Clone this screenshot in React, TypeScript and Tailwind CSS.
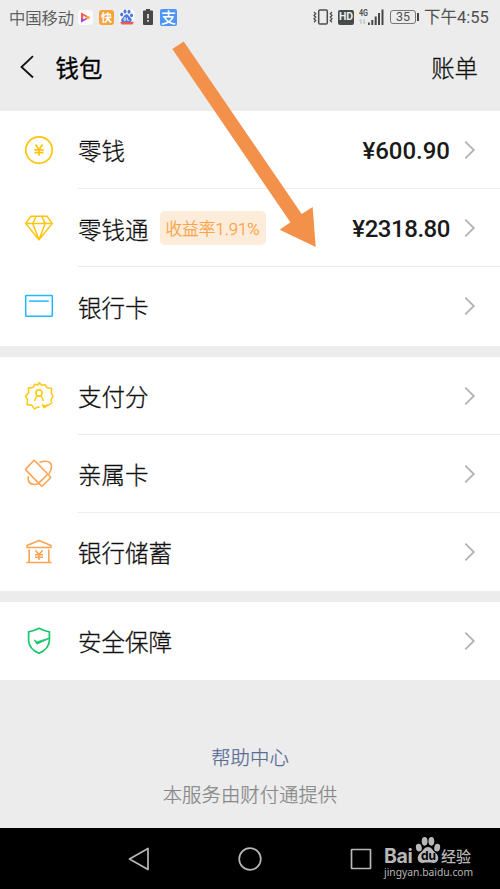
import React from "react";

interface RowProps {
  icon: React.ReactNode;
  title: string;
  tag?: string;
  amount?: string;
  amountClass?: string;
  last?: boolean;
}

const Row: React.FC<RowProps> = ({ icon, title, tag, amount, amountClass = "", last }) => {
  return (
    <div className="flex h-[78.2px] items-stretch pl-6">
      <div className="flex w-[54px] shrink-0 items-center">{icon}</div>
      <div
        className={`flex flex-1 items-center border-b pt-px pr-6 ${last ? "border-transparent" : "border-[#ededed]"}`}
      >
        <span className="pt-[2px] text-[23.5px] leading-none font-light text-[#111] [-webkit-text-stroke:0.3px_#111]">
          {title}
        </span>
        {tag && (
          <span className="ml-[11px] flex h-[34px] w-[106px] items-center justify-center rounded-[5px] bg-[#feecdb] pt-[2px] font-[Roboto,'Noto_Sans_CJK_SC',sans-serif] text-[16.7px] font-light whitespace-nowrap text-[#faa040] [-webkit-text-stroke:0.25px_#faa040]">
            {tag}
          </span>
        )}
        <span
          className={`ml-auto pt-px font-[Roboto,sans-serif] text-[24px] leading-none font-medium text-[#1a1a1a] ${amountClass}`}
        >
          {amount}
        </span>
        <svg className="ml-[14px] h-5 w-3 shrink-0" viewBox="0 0 12 20" fill="none" stroke="#b2b2b2" strokeWidth="1.8">
          <path d="M1.3 1.6 9.8 10l-8.5 8.4" />
        </svg>
      </div>
    </div>
  );
};

const CoinIcon = () => (
  <svg className="h-[30px] w-[30px]" viewBox="0 0 30 30" fill="none" stroke="#fec40c" strokeWidth="1.7">
    <circle cx="15" cy="15" r="13.2" />
    <path d="m11.4 9.500 3.600 5 3.600-5M10.400 14.900h9.200M10.400 17.600h9.200M15 14.500v6.300" />
  </svg>
);

const DiamondIcon = () => (
  <svg className="h-[30px] w-[30px]" viewBox="0 0 30 30" fill="none" stroke="#fec40c" strokeWidth="1.5" strokeLinejoin="round">
    <path d="M7 3.200h16l5.300 7.200L15 26.800 1.700 10.400zM1.700 10.400h26.600M12.200 3.200l-3.400 7.200L15 26.800l6.200-16.400-3.400-7.200" />
  </svg>
);

const CardIcon = () => (
  <svg className="h-[30px] w-[30px]" viewBox="0 0 30 30" fill="none" stroke="#23b7fb" strokeWidth="1.5">
    <rect x="1.7" y="4.4" width="26.6" height="20.9" rx="0.6" />
    <path d="M5 10.100h19.800" />
  </svg>
);

const ScoreIcon = () => (
  <svg className="h-[30px] w-[30px]" viewBox="0 0 30 30" fill="none" stroke="#fdcb18" strokeWidth="1.6" strokeLinejoin="round">
    <path d="M15.600 26.300 14 26l-3.600 1.900-2.500-3.700-4.800-.6.500-4.600-2-3.900 3.100-3.300-.4-4.700 4.600-.7 2-3.100 3.400.6L15 1.600l2.900 2.700 3.200-.6 2 3.100 4.600.7-.4 4.700 1.600 3.300-1.700 2.900.2 2.700" />
    <path d="m18 23.600 1.900 3.600 8.700-5.400-7.600 2.800z" strokeWidth="0.9" fill="#fdcb18" />
    <circle cx="15" cy="12" r="3.100" />
    <path d="M13.400 14.600q-2.300 1.700-2.800 5.400M16.600 14.600q2.300 1.700 2.800 5.400" />
  </svg>
);

const FamilyIcon = () => (
  <svg className="h-[30px] w-[30px]" viewBox="0 0 30 30" fill="none" stroke="#fba351" strokeWidth="1.6" strokeLinejoin="round">
    <path d="M9.600 1.700 1.900 9.900q-.6.6 0 1.200l15.400 15.600q.7.600 1.400 0l7.700-7.700q.6-.6 0-1.200L10.800 1.700q-.6-.6-1.200 0zM14.800 24.100l9.100-9.100" />
    <path d="M15.300 3.600C19 1.800 24 1.600 26.200 3.800c2 2.400 1.500 6.500-1.300 11M4.300 17.400c-.4 3.700.8 7 3.800 7.700 2.100.6 4.500.3 6.700-.6" />
  </svg>
);

const BankIcon = () => (
  <svg className="h-[30px] w-[30px]" viewBox="0 0 30 30" fill="none" stroke="#fba351" strokeWidth="1.6" strokeLinejoin="round">
    <path d="M15 3.600 3 8.500v2h24v-2zM5.200 12.500v13M24.800 12.500v13M2.400 25.500h25.200" />
    <path d="m11.400 13.200 3.600 4.600 3.600-4.600M11 17.800h8M11 20.300h8M15 17.800v5.300" strokeWidth="1.5" />
  </svg>
);

const ShieldIcon = () => (
  <svg className="h-[30px] w-[30px]" viewBox="0 0 30 30" fill="none" stroke="#17c66b" strokeWidth="1.7" strokeLinejoin="round">
    <path d="M25.400 12.200V5.800Q19.500 4.800 15 2.300 10.500 4.800 4.600 5.800v8.900Q5.200 23 15 27.300 24.800 23.200 25.400 14.500v-2.300" />
    <path d="m10.200 13.900 2.700 4.300 12.300-5.600v-.6l-12 3.700z" fill="#17c66b" strokeWidth="0.8" />
  </svg>
);

const StatusBar = () => (
  <div className="flex h-[34px] items-center pl-[9px] text-[#505050]">
    <span className="w-[65px] text-[16.3px] leading-none font-light whitespace-nowrap [-webkit-text-stroke:0.25px_#505050]">
      中国移动
    </span>
    <svg className="ml-[4px] h-[15px] w-[15px]" viewBox="0 0 15 15">
      <defs>
        <linearGradient id="play" x1="0" y1="0" x2="0" y2="1">
          <stop offset="0.1" stopColor="#ff4a50" />
          <stop offset="0.5" stopColor="#f36b4b" />
          <stop offset="0.75" stopColor="#a936ed" />
        </linearGradient>
      </defs>
      <rect width="15" height="15" rx="3.5" fill="#fafafa" />
      <path d="M3 2.500v10l9.300-5z" fill="url(#play)" />
      <path d="m8.400 5.400 3.900 2.100-3.900 2.100z" fill="#ffa53e" />
      <path d="m5.300 5.600 3.200 1.900-3.200 1.900z" fill="#fff" />
    </svg>
    <span className="ml-[6px] flex h-[15px] w-[15px] items-center justify-center rounded-[3px] bg-[#f9a13b] text-[11px] leading-none font-bold text-white">
      快
    </span>
    <svg className="ml-[5px] h-4 w-4" viewBox="0 0 16 16">
      <rect x="0.5" y="0.5" width="15" height="15" rx="3.5" fill="#fafafa" />
      <g fill="#4977e0">
        <ellipse cx="6" cy="2.500" rx="1.500" ry="2" />
        <ellipse cx="10" cy="2.800" rx="1.500" ry="2" />
        <ellipse cx="2.700" cy="5.500" rx="1.500" ry="2" />
        <ellipse cx="12.500" cy="6.300" rx="1.500" ry="1.900" />
        <path d="M7.500 5.300c2 0 2.300 2 4 3.400 2.200 2 1.100 4.600-1.200 4.500-2 0-4.100 0-5.600.1C2 13.400 1.500 10.500 3.500 9c1.700-1.300 2-3.700 4-3.700z" />
      </g>
      <path d="M5.300 8.800h1.500v2.500H5zM8.500 8.500v2.800h2" stroke="#fff" strokeWidth="0.8" fill="none" />
      <path d="M1 12.700h14l-1.500 2.800h-11z" fill="#e45a59" />
    </svg>
    <svg className="ml-2 h-4 w-[10px]" viewBox="0 0 10 16">
      <path d="M3 0h4v1.500h2a1 1 0 0 1 1 1V15a1 1 0 0 1-1 1H1a1 1 0 0 1-1-1V2.500a1 1 0 0 1 1-1h2z" fill="#474747" />
      <path d="M5 5v4.500M5 11v1.700" stroke="#eee" strokeWidth="1.6" />
    </svg>
    <span className="ml-[7px] flex h-[17px] w-[17px] items-center justify-center rounded-[2px] bg-[#4d96f7] pb-px text-[15px] leading-none font-medium text-white">
      支
    </span>

    <svg className="ml-[136px] h-4 w-5" viewBox="0 0 20 16" fill="none" stroke="#4c4c4c">
      <rect x="5.7" y="0.9" width="8.6" height="14.2" rx="1.3" strokeWidth="1.5" />
      <path d="m1 3 1.700 1.700L1 6.400l1.700 1.700L1 9.800l1.700 1.700L1 13.200M19 3l-1.700 1.700L19 6.400l-1.700 1.700L19 9.800l-1.700 1.700 1.700 1.700" strokeWidth="1.3" />
    </svg>
    <span className="ml-[5px] flex h-[15px] w-4 items-center justify-center rounded-[2px] bg-[#4a4a4a] pt-px font-[Roboto,sans-serif] text-[10.5px] leading-none font-bold text-[#eee]">
      HD
    </span>
    <div className="ml-[5px] flex h-4 w-[25px] items-end">
      <div className="flex h-full w-[9px] flex-col">
        <span className="origin-left scale-x-75 font-[Roboto,sans-serif] text-[9.5px] leading-[8px] font-bold">4G</span>
        <svg className="mt-[2px] h-[5px] w-[7px]" viewBox="0 0 7 5" fill="none" stroke="#b8b8b8">
          <path d="M2 5V.5L.5 2M5 0v4.500L6.500 3" />
        </svg>
      </div>
      <svg className="h-4 w-4" viewBox="0 0 16 16" fill="#474747">
        <path d="M0 13.500h1.800V16H0zM3.300 11h2v5h-2zM6.700 7.500h2V16h-2zM10 4h2v12h-2zM13.500.5h2V16h-2z" />
      </svg>
    </div>
    <div className="ml-[6px] flex items-center">
      <span className="flex h-[14px] w-[26px] items-center justify-center rounded-[3px] border border-[#777] font-[Roboto,sans-serif] text-[12.5px] leading-none">
        35
      </span>
      <span className="ml-px h-2 w-[2px] bg-[#474747]" />
    </div>
    <span className="ml-[5px] pt-[3px] font-[Roboto,'Noto_Sans_CJK_SC',sans-serif] text-[16.5px] leading-none whitespace-nowrap">
      下午4:55
    </span>
  </div>
);

const Watermark = () => (
  <div className="absolute top-[836px] left-[384px] w-[92px] text-[#b8b8b8]">
    <div className="flex h-[28px] items-end">
      <span className="mb-px w-[31px] font-[Inter,sans-serif] text-[19.5px] leading-[14px] font-bold tracking-[-0.3px]">Bai</span>
      <div className="relative h-[28px] w-[26px]">
        <svg className="absolute top-0 left-0 h-[28px] w-[26px]" viewBox="0 0 26 29" fill="currentColor">
          <ellipse cx="3.500" cy="12" rx="3" ry="4" transform="rotate(-12 3.500 12)" />
          <ellipse cx="9.500" cy="5.500" rx="3" ry="4.500" />
          <ellipse cx="16.500" cy="5.500" rx="3" ry="4.500" />
          <ellipse cx="22.500" cy="12" rx="3" ry="4" transform="rotate(12 22.500 12)" />
          <path d="M13 11.500c4 0 4.700 3.700 7.500 5.700 5.300 4 3.500 11.300-2 10.700-3.800-.6-7.200-.6-11 0C2 28.500.2 21.200 5.500 17.200c2.800-2 3.500-5.700 7.500-5.700z" />
        </svg>
        <span className="absolute top-[14px] left-[6px] font-[Inter,sans-serif] text-[12px] leading-none font-bold text-black">du</span>
      </div>
      <span className="mb-px text-[15px] leading-[15px] font-medium">经验</span>
    </div>
    <div className="mt-[2px] font-['Noto_Sans',sans-serif] text-[10.3px] leading-[12px] whitespace-nowrap">jingyan.baidu.com</div>
  </div>
);

export default function App() {
  return (
    <div className="relative flex h-[889px] w-[500px] flex-col overflow-hidden bg-[#ececec] font-['Noto_Sans_CJK_SC',sans-serif]">
      <StatusBar />
      <header className="flex h-[77px] items-start pt-[21px] pr-[22px] pl-[20px]">
        <svg className="h-6 w-[14px]" viewBox="0 0 14 24" fill="none" stroke="#111" strokeWidth="1.8">
          <path d="M13 1.100 1.500 12 13 22.500" />
        </svg>
        <h1 className="ml-[21.5px] text-[23.4px] leading-[24px] font-normal text-black [-webkit-text-stroke:0.3px_#000]">钱包</h1>
        <span className="ml-auto text-[23.4px] leading-[24px] font-light text-[#111] [-webkit-text-stroke:0.3px_#111]">账单</span>
      </header>

      <section className="bg-white">
        <Row icon={<CoinIcon />} title="零钱" amount="¥600.90" />
        <Row icon={<DiamondIcon />} title="零钱通" tag="收益率1.91%" amount="¥2318.80" amountClass="tracking-[-0.45px]" />
        <Row icon={<CardIcon />} title="银行卡" last />
      </section>
      <section className="mt-[11px] bg-white">
        <Row icon={<ScoreIcon />} title="支付分" />
        <Row icon={<FamilyIcon />} title="亲属卡" />
        <Row icon={<BankIcon />} title="银行储蓄" last />
      </section>
      <section className="mt-[11px] bg-white">
        <Row icon={<ShieldIcon />} title="安全保障" last />
      </section>

      <footer className="flex flex-1 flex-col items-center pt-[66px]">
        <a className="text-[19.4px] leading-[22px] font-light text-[#576b95] [-webkit-text-stroke:0.25px_#576b95]">帮助中心</a>
        <p className="mt-[15px] text-[19.4px] leading-[22px] font-light whitespace-nowrap text-[#888] [-webkit-text-stroke:0.25px_#888]">
          本服务由财付通提供
        </p>
      </footer>

      <nav className="flex h-[61px] items-center bg-black pl-[127px]">
        <svg className="h-6 w-[246px]" viewBox="0 0 246 24" fill="none" stroke="#b8b8b8" strokeWidth="1.7" strokeLinejoin="round">
          <path d="M21 1.500v21L2.500 12z" />
          <circle cx="123" cy="12" r="10.8" />
          <rect x="224.5" y="2.5" width="19" height="19" rx="0.5" />
        </svg>
      </nav>

      {/* Pointer towards the balance */}
      <svg className="pointer-events-none absolute top-0 left-0 h-[260px] w-[340px]" viewBox="0 0 340 260">
        <path d="m172.300 49 11.400-7.400L301.700 214l11-7 3 40-36-17.300 10.700-7.400z" fill="#f3914a" />
      </svg>
      <Watermark />
    </div>
  );
}
